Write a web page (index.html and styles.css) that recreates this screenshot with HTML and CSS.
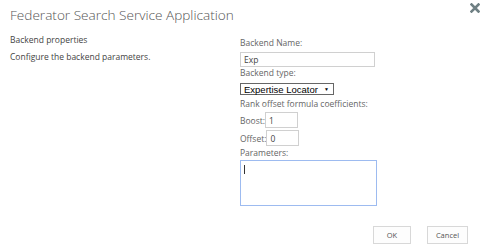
FILE: index.html
```html
<!DOCTYPE html>
<html lang="en">
<head>
  <meta charset="UTF-8" />
  <title>Federator Search Service Application</title>
  <link rel="stylesheet" href="styles.css">
</head>
<body>
  <div class="dialog">
    <div class="dialog-head">
      <h1 class="title">Federator Search Service Application</h1>
      <svg class="close" width="10" height="10" viewBox="0 0 10 10">
        <path d="M1.5 1.5 L8.5 8.5 M8.5 1.5 L1.5 8.5" stroke="#6f8084" stroke-width="2.6" stroke-linecap="square" />
      </svg>
    </div>

    <div class="section">
      <div class="section-info">
        <div class="section-name">Backend properties</div>
        <div class="section-desc">Configure the backend parameters.</div>
      </div>

      <div class="section-fields">
        <label class="field-label">Backend Name:</label>
        <input class="text-input wide" type="text" value="Exp" />

        <label class="field-label type">Backend type:</label>
        <div class="select-box">
          <span>Expertise Locator</span>
          <span class="arrow">&#9660;</span>
        </div>

        <label class="field-label rank">Rank offset formula coefficients:</label>
        <div class="coef-row">
          <span class="coef-label">Boost:</span>
          <input class="text-input small" type="text" value="1" />
        </div>
        <div class="coef-row second">
          <span class="coef-label">Offset:</span>
          <input class="text-input small" type="text" value="0" />
        </div>

        <label class="field-label params">Parameters:</label>
        <div class="params-box">
          <span class="caret"></span>
        </div>
      </div>
    </div>

    <div class="buttons">
      <button class="btn">OK</button>
      <button class="btn">Cancel</button>
    </div>
  </div>
</body>
</html>
```

FILE: styles.css
```css
body {
  margin: 0;
  padding: 0;
  background: #fff;
  font-family: 'Open Sans', 'Noto Sans', sans-serif;
  color: #444;
}
.dialog {
  width: 485px;
  height: 250px;
  position: relative;
}
.dialog-head {
  box-sizing: border-box;
  padding: 5px 0 0 10px;
  height: 30px;
}
.title {
  margin: 0;
  font-size: 13.6px;
  font-weight: 300;
  color: #555;
  line-height: 20px;
}
.close {
  position: absolute;
  top: 3px;
  right: 5px;
}
.section {
  display: flex;
  padding-top: 4px;
}
.section-info {
  width: 230px;
  padding-left: 10px;
  font-size: 8.5px;
  color: #444;
}
.section-name {
  line-height: 12px;
  margin-bottom: 5px;
}
.section-desc {
  line-height: 12px;
}
.section-fields {
  display: flex;
  flex-direction: column;
  align-items: flex-start;
  font-size: 8.5px;
  color: #666;
  padding-top: 3px;
}
.field-label {
  line-height: 12px;
  margin-bottom: 3px;
}
.field-label.type {
  margin-bottom: 4px;
}
.field-label.rank {
  margin-bottom: 2px;
}
.field-label.params {
  margin-top: 1px;
  margin-bottom: 1px;
}
.text-input {
  box-sizing: border-box;
  border: 1px solid #d0d0d0;
  height: 15px;
  padding: 0 3px;
  font-family: 'Open Sans', sans-serif;
  font-size: 8.5px;
  color: #444;
  margin: 0;
  outline: none;
}
.text-input.wide {
  width: 135px;
}
.select-box {
  box-sizing: border-box;
  width: 94px;
  height: 12px;
  border: 1px solid #666;
  display: flex;
  justify-content: space-between;
  align-items: center;
  padding: 0 4px 0 3px;
  font-family: 'Liberation Sans', Arial, sans-serif;
  font-size: 9.5px;
  color: #000;
  margin-bottom: 3px;
}
.select-box .arrow {
  font-size: 5px;
}
.coef-row {
  display: flex;
  align-items: center;
}
.coef-row.second {
  margin-top: 2px;
}
.text-input.small {
  width: 33px;
  height: 16px;
}
.params-box {
  box-sizing: border-box;
  width: 137px;
  height: 46px;
  border: 1px solid #9dbbf0;
  position: relative;
}
.caret {
  position: absolute;
  left: 3px;
  top: 4px;
  width: 1px;
  height: 9px;
  background: #333;
}
.buttons {
  position: absolute;
  right: 17px;
  bottom: 6px;
  display: flex;
  gap: 16px;
}
.btn {
  box-sizing: border-box;
  height: 18px;
  width: 38px;
  background: #fdfdfd;
  border: 1px solid #d8d8d8;
  font-family: 'Open Sans', sans-serif;
  font-size: 7.5px;
  color: #555;
  padding: 0;
}
.btn + .btn {
  width: 41px;
}
```
